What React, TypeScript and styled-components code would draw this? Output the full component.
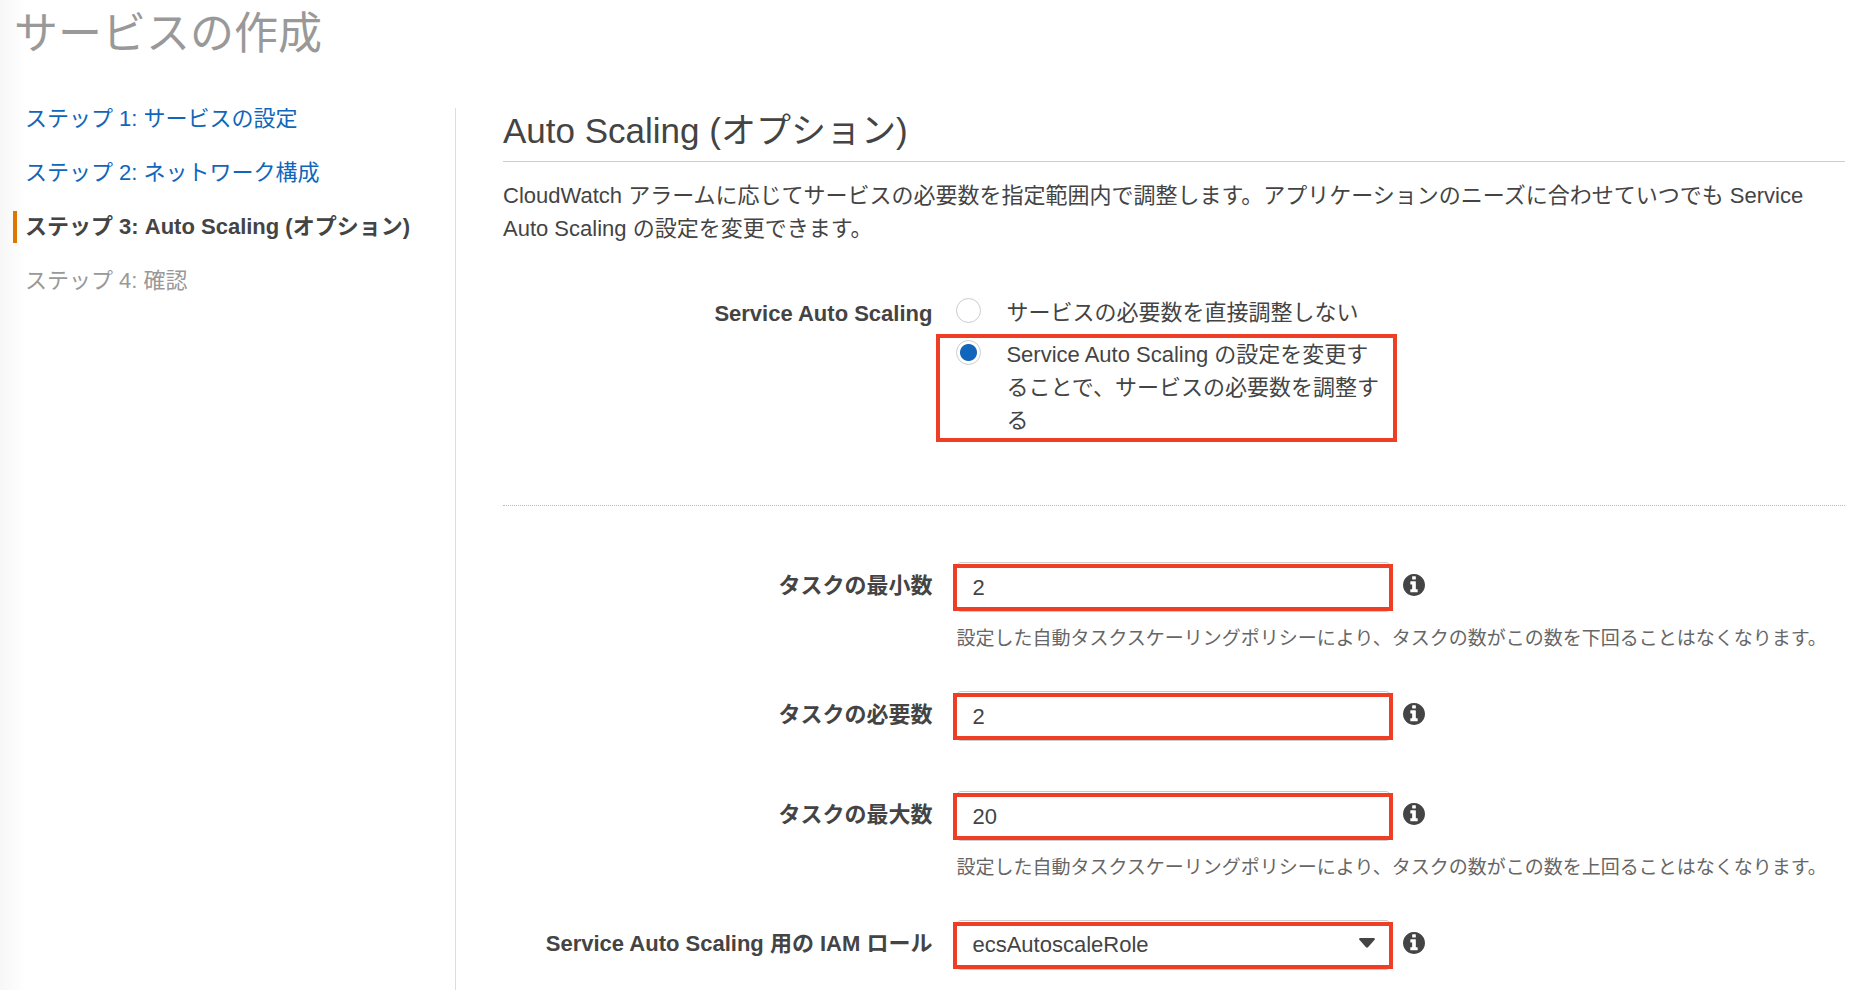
import React from 'react';
import styled, { createGlobalStyle, css } from 'styled-components';

const colors = {
  text: '#444',
  muted: '#999',
  hint: '#666',
  link: '#1166bb',
  accent: '#dd7700',
  line: '#ccc',
  highlight: '#ee3f26',
};

const GlobalStyle = createGlobalStyle`
  *, *::before, *::after { box-sizing: border-box; }
  body {
    margin: 0;
    background: #fff;
    color: ${colors.text};
    font-family: "Liberation Sans", "Noto Sans CJK JP", sans-serif;
    font-size: 22px;
    line-height: 33px;
  }
`;

const Page = styled.div`
  display: flex;
  flex-direction: column;
  min-height: 100vh;
  background: linear-gradient(to right, #f7f7f7, #fff 26px);
`;

const Header = styled.header`
  padding: 8px 14px 48px;
`;

const Title = styled.h1`
  margin: 0;
  color: ${colors.muted};
  font-size: 44px;
  font-weight: 400;
  line-height: 52px;
`;

const Columns = styled.div`
  display: flex;
  flex: 1;
`;

const Sidebar = styled.nav`
  flex: 0 0 456px;
  border-right: 1px solid #ddd;
`;

const StepList = styled.ol`
  display: flex;
  flex-direction: column;
  gap: 22px;
  margin: -5px 0 0;
  padding: 0 0 0 13px;
  list-style: none;
`;

const Step = styled.li<{ $state: 'link' | 'current' | 'pending' }>`
  padding-left: 8px;
  border-left: 4px solid transparent;
  line-height: 32px;
  color: ${colors.muted};
  ${({ $state }) =>
    $state === 'current' &&
    css`
      border-left-color: ${colors.accent};
      color: ${colors.text};
      font-weight: 700;
    `}
`;

const StepLink = styled.a`
  color: ${colors.link};
  text-decoration: none;
`;

const Main = styled.main`
  flex: 1;
  min-width: 0;
  padding: 0 21px 20px 47px;
`;

const SectionTitle = styled.h2`
  margin: 0;
  padding: 2px 0 9px;
  border-bottom: 1px solid ${colors.line};
  font-size: 35px;
  font-weight: 400;
  line-height: 42px;
`;

const Description = styled.p`
  margin: 17px 0 51px;
`;

const FormRow = styled.div`
  display: grid;
  grid-template-columns: 32% minmax(0, 1fr);
  column-gap: 24px;
  align-items: start;
`;

const labelText = css`
  font-weight: 700;
  text-align: right;
`;

const GroupLabel = styled.span`
  ${labelText}
  line-height: 35px;
`;

const FieldLabel = styled.label`
  ${labelText}
  line-height: 48px;
`;

const RadioGroup = styled.div`
  display: flex;
  flex-direction: column;
  gap: 9px;
  max-width: 440px;
`;

const Highlight = css<{ $inset: string }>`
  &::after {
    content: '';
    position: absolute;
    inset: ${({ $inset }) => $inset};
    border: 4px solid ${colors.highlight};
    pointer-events: none;
  }
`;

const Option = styled.label<{ $marked?: boolean; $inset: string }>`
  position: relative;
  display: flex;
  align-items: flex-start;
  gap: 25px;
  padding-right: 12px;
  ${({ $marked }) => $marked && Highlight}
`;

const Radio = styled.input`
  flex: none;
  appearance: none;
  width: 25px;
  height: 25px;
  margin: 2px 0 0;
  border: 1px solid ${colors.line};
  border-radius: 50%;
  background: #fff;
  &:checked {
    background: radial-gradient(circle, ${colors.link} 8px, #fff 9px);
  }
`;

const Divider = styled.hr`
  margin: 68px 0 56px;
  border: 0;
  border-top: 1px dotted #bbb;
`;

const Fields = styled.div`
  display: flex;
  flex-direction: column;
  gap: 40px;
`;

const Field = styled.div`
  min-height: 60px;
`;

const ControlLine = styled.div`
  display: flex;
  align-items: flex-start;
  gap: 12px;
`;

const ControlFrame = styled.div<{ $inset: string }>`
  position: relative;
  flex: 0 1 435px;
  ${Highlight}
`;

const control = css`
  display: block;
  width: 100%;
  height: 50px;
  padding: 2px 15px 0;
  border: 1px solid ${colors.line};
  border-radius: 5px;
  background: #fff;
  color: ${colors.text};
  font: inherit;
`;

const TextInput = styled.input`
  ${control}
`;

const Select = styled.select`
  ${control}
  appearance: none;
  padding: 0 15px 2px;
`;

const Caret = styled.svg`
  position: absolute;
  top: 18px;
  right: 16px;
  width: 16px;
  height: 10px;
  fill: ${colors.text};
  pointer-events: none;
`;

const InfoButton = styled.button`
  flex: none;
  width: 22px;
  height: 22px;
  margin: 12px 0 0;
  padding: 0;
  border: 0;
  background: none;
  color: ${colors.text};
  cursor: pointer;
  svg {
    display: block;
    width: 100%;
    height: 100%;
    fill: currentColor;
  }
`;

const Hint = styled.p`
  margin: 15px 0 0;
  color: ${colors.hint};
  font-size: 19px;
  line-height: 24px;
`;

const Info = ({ label }: { label: string }) => (
  <InfoButton type="button" aria-label={label}>
    <svg viewBox="128 128 1536 1536" aria-hidden="true">
      <path d="M1152 1376v-160q0-14-9-23t-23-9h-96v-512q0-14-9-23t-23-9h-320q-14 0-23 9t-9 23v160q0 14 9 23t23 9h96v320h-96q-14 0-23 9t-9 23v160q0 14 9 23t23 9h448q14 0 23-9t9-23zM1024 480v-160q0-14-9-23t-23-9h-192q-14 0-23 9t-9 23v160q0 14 9 23t23 9h192q14 0 23-9t9-23zM1664 896q0 209-103 385.5t-279.5 279.5-385.5 103-385.5-103-279.5-279.5-103-385.5 103-385.5 279.5-279.5 385.5-103 385.5 103 279.5 279.5 103 385.5z" />
    </svg>
  </InfoButton>
);

const FIELD_INSET = '2px -2px 1px -3px';
const OPTION_INSET = '-4px -1px -5px -20px';

const taskFields = [
  {
    id: 'min-tasks',
    label: 'タスクの最小数',
    value: '2',
    hint: '設定した自動タスクスケーリングポリシーにより、タスクの数がこの数を下回ることはなくなります。',
  },
  { id: 'desired-tasks', label: 'タスクの必要数', value: '2' },
  {
    id: 'max-tasks',
    label: 'タスクの最大数',
    value: '20',
    hint: '設定した自動タスクスケーリングポリシーにより、タスクの数がこの数を上回ることはなくなります。',
  },
];

export default function App() {
  return (
    <>
      <GlobalStyle />
      <Page lang="ja">
        <Header>
          <Title>サービスの作成</Title>
        </Header>
        <Columns>
          <Sidebar>
            <StepList>
              <Step $state="link">
                <StepLink href="#step1">ステップ 1: サービスの設定</StepLink>
              </Step>
              <Step $state="link">
                <StepLink href="#step2">ステップ 2: ネットワーク構成</StepLink>
              </Step>
              <Step $state="current" aria-current="step">
                ステップ 3: Auto Scaling (オプション)
              </Step>
              <Step $state="pending">ステップ 4: 確認</Step>
            </StepList>
          </Sidebar>
          <Main>
            <SectionTitle>Auto Scaling (オプション)</SectionTitle>
            <Description>
              CloudWatch アラームに応じてサービスの必要数を指定範囲内で調整します。アプリケーションのニーズに合わせていつでも
              Service Auto Scaling の設定を変更できます。
            </Description>
            <FormRow>
              <GroupLabel id="scaling-label">Service Auto Scaling</GroupLabel>
              <RadioGroup role="radiogroup" aria-labelledby="scaling-label">
                <Option $inset={OPTION_INSET}>
                  <Radio type="radio" name="scaling" value="none" />
                  <span>サービスの必要数を直接調整しない</span>
                </Option>
                <Option $marked $inset={OPTION_INSET}>
                  <Radio type="radio" name="scaling" value="auto" defaultChecked />
                  <span>Service Auto Scaling の設定を変更することで、サービスの必要数を調整する</span>
                </Option>
              </RadioGroup>
            </FormRow>
            <Divider />
            <Fields>
              {taskFields.map(({ id, label, value, hint }) => (
                <FormRow key={id}>
                  <FieldLabel htmlFor={id}>{label}</FieldLabel>
                  <Field>
                    <ControlLine>
                      <ControlFrame $inset={FIELD_INSET}>
                        <TextInput id={id} type="text" inputMode="numeric" defaultValue={value} />
                      </ControlFrame>
                      <Info label={label} />
                    </ControlLine>
                    {hint && <Hint>{hint}</Hint>}
                  </Field>
                </FormRow>
              ))}
              <FormRow>
                <FieldLabel htmlFor="iam-role">Service Auto Scaling 用の IAM ロール</FieldLabel>
                <ControlLine>
                  <ControlFrame $inset={FIELD_INSET}>
                    <Select id="iam-role" defaultValue="ecsAutoscaleRole">
                      <option>ecsAutoscaleRole</option>
                    </Select>
                    <Caret viewBox="0 0 16 10" aria-hidden="true">
                      <path d="M1 0H15Q16.500 .6 15.600 1.800L9 9.300Q8 10.200 7 9.300L.4 1.800Q-.5 .6 1 0Z" />
                    </Caret>
                  </ControlFrame>
                  <Info label="Service Auto Scaling 用の IAM ロール" />
                </ControlLine>
              </FormRow>
            </Fields>
          </Main>
        </Columns>
      </Page>
    </>
  );
}
